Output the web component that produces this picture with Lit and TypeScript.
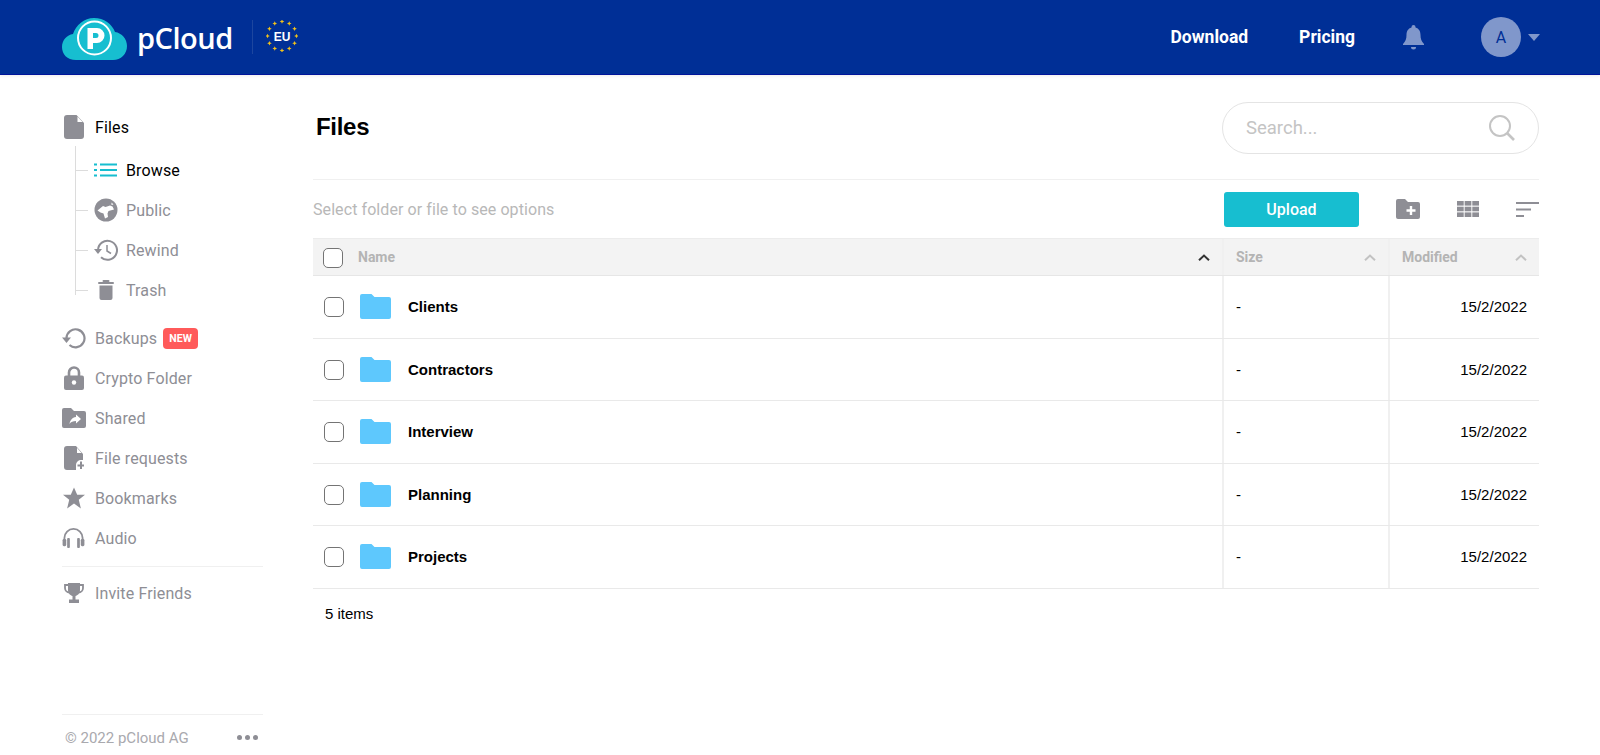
import { LitElement, html, css, svg } from 'lit';
import { customElement } from 'lit/decorators.js';

const G = '#8e8e95';

const icons: Record<string, unknown> = {
  file: svg`<svg width="20" height="24" viewBox="0 0 20 24"><path fill="${G}" d="M3 0h9.500L20 8v13a3 3 0 0 1-3 3H3a3 3 0 0 1-3-3V3a3 3 0 0 1 3-3z"/><path fill="#fff" d="M13.500 1.600 18.600 7h-5.100z"/></svg>`,
  list: svg`<svg width="24" height="14" viewBox="0 0 24 14" fill="#17bed0"><rect x="0" y="0.500" width="3" height="2"/><rect x="0" y="6" width="3" height="2"/><rect x="0" y="11.500" width="3" height="2"/><rect x="6" y="0.500" width="17" height="2"/><rect x="6" y="6" width="17" height="2"/><rect x="6" y="11.500" width="17" height="2"/></svg>`,
  globe: svg`<svg width="24" height="24" viewBox="0 0 24 24"><circle cx="12" cy="12" r="11.500" fill="${G}"/><path fill="#fff" d="M3.500 12.500 9 8l2.500 1L16 7.500l2.500 1 1.500 3-5.500 1.500-1 2.500.5 3.500-3 1.500-1.500-5-3-1zM17.500 4.500l2 2-2 .5z"/></svg>`,
  rewind: svg`<svg width="24" height="22" viewBox="0 0 24 22" fill="none" stroke="${G}" stroke-width="2"><path d="M4 11a9.500 9.500 0 1 1 3 7.200"/><path d="M13 6v6l4 2.500" stroke-width="1.500"/><path fill="${G}" stroke="none" d="M0 10h8l-4 5z"/></svg>`,
  trash: svg`<svg width="16" height="20" viewBox="0 0 16 20" fill="${G}"><rect x="0" y="2" width="16" height="2" rx="1"/><rect x="4.500" y="0" width="7" height="2" rx="1"/><path d="M1.500 5.500h13V18a2 2 0 0 1-2 2h-9a2 2 0 0 1-2-2z"/></svg>`,
  backup: svg`<svg width="24" height="22" viewBox="0 0 24 22" fill="none" stroke="${G}" stroke-width="2.200"><path d="M4.500 11a9 9 0 1 1 3 7"/><path fill="${G}" stroke="none" d="M0 10.500h9L4.500 16z"/></svg>`,
  lock: svg`<svg width="20" height="24" viewBox="0 0 20 24"><path fill="none" stroke="${G}" stroke-width="2.600" d="M5 11V6.500a5 5 0 0 1 10 0V11"/><rect y="9.500" width="20" height="14.500" rx="2" fill="${G}"/><circle cx="10" cy="16.500" r="2.200" fill="#fff"/></svg>`,
  shared: svg`<svg width="24" height="20" viewBox="0 0 24 20"><path fill="${G}" d="M2 0h7l3 3h10a2 2 0 0 1 2 2v13a2 2 0 0 1-2 2H2a2 2 0 0 1-2-2V2a2 2 0 0 1 2-2z"/><path fill="#fff" d="M14 6.500 19 11l-5 4.500V13c-3 0-5 .7-6.500 3 .5-3.500 2.500-6.500 6.500-7z"/></svg>`,
  request: svg`<svg width="20" height="24" viewBox="0 0 20 24"><path fill="${G}" d="M3 0h9l7 8v6h-2a5 5 0 0 0-5 5v5H3a3 3 0 0 1-3-3V3a3 3 0 0 1 3-3z"/><path fill="#fff" d="M13 1.800 17.600 7H13z"/><path stroke="${G}" stroke-width="2" d="M17 15.500v7.500M13.500 19.500H21"/></svg>`,
  star: svg`<svg style="margin-left:1px" width="22" height="22" viewBox="0 0 24 23"><path fill="${G}" d="m12 0 3.500 8H24l-6.800 5.500L19.500 23 12 17.500 4.500 23l2.300-9.500L0 8h8.500z"/></svg>`,
  audio: svg`<svg width="23" height="20" viewBox="0 0 24 22"><path fill="none" stroke="${G}" stroke-width="2" d="M2 14v-3a10 10 0 0 1 20 0v3"/><rect x="0" y="12" width="4" height="8" rx="1.500" fill="${G}"/><rect x="5" y="11" width="3" height="11" rx="1" fill="${G}"/><rect x="16" y="11" width="3" height="11" rx="1" fill="${G}"/><rect x="20" y="12" width="4" height="8" rx="1.500" fill="${G}"/></svg>`,
  trophy: svg`<svg width="20" height="20" viewBox="0 0 20 20"><path fill="none" stroke="${G}" stroke-width="1.800" d="M4 2H1v3c0 2.500 2 4.500 4.500 4.500M16 2h3v3c0 2.500-2 4.500-4.500 4.500"/><path fill="${G}" d="M4 0h12v7c0 3.500-2.500 5.500-4.500 6v3.500H15V20H5v-3.500h3.500V13C6.500 12.500 4 10.500 4 7z"/></svg>`,
  folder: svg`<svg width="31" height="25" viewBox="0 0 31 25"><path fill="#5ec8fd" d="M2 0h9.500l3 3H29a2 2 0 0 1 2 2v18a2 2 0 0 1-2 2H2a2 2 0 0 1-2-2V2a2 2 0 0 1 2-2z"/></svg>`,
  chevron: svg`<svg width="12" height="7" viewBox="0 0 12 7" fill="none" stroke="currentColor" stroke-width="2"><path d="M1 6.200 6 1.500l5 4.700"/></svg>`,
};

const sub = [
  { id: 'list', label: 'Browse', active: true },
  { id: 'globe', label: 'Public' },
  { id: 'rewind', label: 'Rewind' },
  { id: 'trash', label: 'Trash' },
];

const nav = [
  { id: 'backup', label: 'Backups', badge: 'NEW' },
  { id: 'lock', label: 'Crypto Folder', narrow: true },
  { id: 'shared', label: 'Shared' },
  { id: 'request', label: 'File requests', narrow: true },
  { id: 'star', label: 'Bookmarks' },
  { id: 'audio', label: 'Audio' },
];

const folders = ['Clients', 'Contractors', 'Interview', 'Planning', 'Projects'];

// 12 small stars round the EU mark
const stars = Array.from({ length: 12 }, (_, i) => {
  const a = (i * Math.PI) / 6;
  const x = 16 + 14.5 * Math.sin(a);
  const y = 16 - 14.5 * Math.cos(a);
  const s = 2.3;
  return svg`<path fill="#f2c21a" d="M${x} ${y - s}L${x + s * 0.3} ${y - s * 0.3}L${x + s} ${y}L${x + s * 0.3} ${y + s * 0.3}L${x} ${y + s}L${x - s * 0.3} ${y + s * 0.3}L${x - s} ${y}L${x - s * 0.3} ${y - s * 0.3}Z"/>`;
});

@customElement('app-root')
export class AppRoot extends LitElement {
  static styles = css`
    :host {
      display: flex;
      flex-direction: column;
      height: 100vh;
      overflow: hidden;
      background: #fff;
      font-family: Roboto, sans-serif;
      color: #000;
    }
    .top {
      flex: none;
      height: 74px;
      background: #002f96;
      border-bottom: 1px solid #00149a;
      box-shadow: 0 1px 3px rgba(0, 0, 0, 0.08);
      display: flex;
      align-items: center;
      padding: 0 60px 0 62px;
    }
    .top svg { display: block; flex: none; }
    .cloud { margin-top: 4px; }
    .brand {
      font-family: 'Open Sans', sans-serif;
      font-size: 29px;
      font-weight: 600;
      letter-spacing: -0.5px;
      color: #fff;
      margin-left: 10px;
      line-height: 1;
    }
    .sep {
      width: 1px;
      height: 34px;
      background: #1d469f;
      margin: 0 13px 0 19px;
    }
    .eu { margin-top: -2px; }
    .top-right {
      margin-left: auto;
      display: flex;
      align-items: center;
    }
    .top-link {
      color: #fff;
      font-size: 17.500px;
      font-weight: 700;
      margin-right: 51px;
    }
    .bell { margin: 0 57px 0 -3px; }
    .avatar {
      width: 40px;
      height: 40px;
      border-radius: 50%;
      background: #8097cb;
      color: #002f96;
      display: flex;
      align-items: center;
      justify-content: center;
      font-size: 16px;
    }
    .caret {
      width: 0;
      height: 0;
      border-left: 6px solid transparent;
      border-right: 6px solid transparent;
      border-top: 7px solid #8097cb;
      margin-left: 7px;
    }
    .body {
      flex: 1;
      display: flex;
      min-height: 0;
      padding: 0 61px 0 62px;
    }
    .side {
      flex: none;
      width: 201px;
      margin-right: 50px;
      display: flex;
      flex-direction: column;
      padding-top: 32px;
      font-size: 16px;
      letter-spacing: 0.13px;
      color: #8e8e95;
    }
    .item {
      height: 40px;
      flex: none;
      display: flex;
      align-items: center;
      white-space: nowrap;
    }
    .ico {
      width: 33px;
      flex: none;
      display: flex;
    }
    .ico svg { display: block; }
    .ico.narrow svg { margin-left: 2px; }
    .current { color: #000; }
    .tree {
      margin: -1px 0 23px 13px;
      border-left: 1px solid #dcdcdc;
      padding: 4px 0 0 18px;
      height: 145px;
      flex: none;
    }
    .tree .item { position: relative; }
    .tree .item::before {
      content: '';
      position: absolute;
      left: -18px;
      top: 50%;
      width: 12px;
      border-top: 1px solid #dcdcdc;
    }
    .tree .ico { justify-content: center; width: 24px; margin-right: 8px; }
    .badge {
      background: #ff5a5a;
      color: #fff;
      font-size: 10.500px;
      font-weight: 700;
      border-radius: 4px;
      padding: 4px 6px;
      margin-left: 6px;
      line-height: 13px;
    }
    .rule {
      height: 1px;
      background: #f0f0f0;
      margin: 8px 0 6px;
      flex: none;
    }
    .foot {
      margin-top: auto;
      border-top: 1px solid #f0f0f0;
      height: 35px;
      display: flex;
      align-items: center;
      justify-content: space-between;
      font-size: 15px;
      letter-spacing: 0;
      color: #a9a9ae;
      padding: 5px 5px 0 3px;
      flex: none;
    }
    .dots { display: flex; gap: 3px; }
    .dots i { width: 5px; height: 5px; border-radius: 50%; background: #8e8e95; }
    .main { flex: 1; min-width: 0; display: flex; flex-direction: column; }
    .head {
      display: flex;
      align-items: center;
      justify-content: space-between;
      padding: 27px 0 25px;
      border-bottom: 1px solid #f0f0f0;
    }
    h1 {
      margin: -2px 0 0 3px;
      font-size: 24px;
      font-weight: 700;
      letter-spacing: -0.3px;
      font-family: 'Liberation Sans', sans-serif;
    }
    .search {
      width: 317px;
      height: 52px;
      box-sizing: border-box;
      border: 1px solid #e4e4e4;
      border-radius: 26px;
      display: flex;
      align-items: center;
      justify-content: space-between;
      padding: 0 23px;
      font-size: 18.500px;
      color: #c4c4c4;
    }
    .tools {
      height: 58px;
      display: flex;
      align-items: center;
      color: #b8b8b8;
      font-size: 16px;
      letter-spacing: 0.08px;
    }
    .upload {
      margin-left: auto;
      width: 135px;
      height: 35px;
      border-radius: 3px;
      background: #17bed0;
      color: #fff;
      font-size: 16px;
      font-weight: 500;
      letter-spacing: 0;
      display: flex;
      align-items: center;
      justify-content: center;
      margin-top: 1px;
    }
    .tools svg { display: block; flex: none; margin-left: 37px; }
    .row {
      display: grid;
      grid-template-columns: 909px 166px 151px;
      height: 62.500px;
      box-sizing: border-box;
      border-bottom: 1px solid #e9e9e9;
      font: 15px 'Liberation Sans', sans-serif;
    }
    .row > div { display: flex; align-items: center; min-width: 0; }
    .row > div + div { border-left: 2px solid #f0f0f0; box-sizing: border-box; padding-left: 12px; }
    .row .date { justify-content: flex-end; padding-right: 12px; }
    .row .name { padding-left: 11px; font-weight: 700; }
    .box {
      width: 20px;
      height: 20px;
      box-sizing: border-box;
      border: 1.500px solid #747474;
      border-radius: 5px;
      background: #fff;
      flex: none;
      margin-top: 1px;
    }
    .row .name svg { display: block; flex: none; margin: 0 17px 0 16px; }
    .row.th {
      height: 38px;
      background: #f3f3f3;
      border-top: 1px solid #ececec;
      border-bottom: 1px solid #e6e6e6;
      font: 700 14px Roboto, sans-serif;
      color: #b4b4b4;
    }
    .th > div { justify-content: space-between; padding-right: 12px; }
    .th > div + div { padding-left: 12px; }
    .th .namecol { padding-left: 10px; }
    .th .label { margin-left: 15px; margin-right: auto; }
    .th svg { display: block; }
    .th .on { color: #333; }
    .th .off { color: #c2c2c2; }
    .count { font: 15px 'Liberation Sans', sans-serif; padding: 16px 0 0 12px; }
  `;

  render() {
    return html`
      <div class="top">
        <svg class="cloud" width="65" height="42" viewBox="0 0 65 42">
          <path fill="#17bed0" d="M14 42C5 42 0 36 0 29c0-7 5-12 11-13C14 7 22 0 32 0c10 0 18 6 21 14 7 1 12 7 12 14 0 8-6 14-14 14z"/>
          <circle cx="32.500" cy="20" r="16.500" fill="none" stroke="#fff" stroke-width="2"/>
          <path fill="#fff" d="M25.500 10h9.500a7.500 7.500 0 0 1 0 15h-4v6h-5.500zm5.500 5v5h3a2.500 2.500 0 0 0 0-5z"/>
        </svg>
        <span class="brand">pCloud</span>
        <span class="sep"></span>
        <svg class="eu" width="32" height="32" viewBox="0 0 32 32">
          ${stars}
          <text x="16" y="20.500" text-anchor="middle" font-family="Liberation Sans" font-weight="700" font-size="12" fill="#fff">EU</text>
        </svg>
        <div class="top-right">
          <span class="top-link">Download</span>
          <span class="top-link">Pricing</span>
          <svg class="bell" width="21" height="25" viewBox="0 0 21 25" fill="#8097cb">
            <path d="M10.500 0a2 2 0 0 1 2 2v.500c3.500 1 5 4 5 7.500 0 4 1 6.500 3.500 9v1H0v-1c2.500-2.500 3.500-5 3.500-9 0-3.500 1.500-6.500 5-7.500V2a2 2 0 0 1 2-2z"/>
            <path d="M8 22h5a2.500 2.500 0 0 1-5 0z"/>
          </svg>
          <div class="avatar">A</div>
          <span class="caret"></span>
        </div>
      </div>
      <div class="body">
        <nav class="side">
          <div class="item current"><span class="ico narrow">${icons.file}</span>Files</div>
          <div class="tree">
            ${sub.map(s => html`
              <div class="item ${s.active ? 'current' : ''}"><span class="ico">${icons[s.id]}</span>${s.label}</div>
            `)}
          </div>
          ${nav.map(n => html`
            <div class="item">
              <span class="ico ${n.narrow ? 'narrow' : ''}">${icons[n.id]}</span>${n.label}
              ${n.badge ? html`<span class="badge">${n.badge}</span>` : ''}
            </div>
          `)}
          <div class="rule"></div>
          <div class="item"><span class="ico narrow">${icons.trophy}</span>Invite Friends</div>
          <div class="foot">
            <span>© 2022 pCloud AG</span>
            <span class="dots"><i></i><i></i><i></i></span>
          </div>
        </nav>
        <main class="main">
          <div class="head">
            <h1>Files</h1>
            <div class="search">
              <span>Search...</span>
              <svg width="26" height="26" viewBox="0 0 26 26" fill="none" stroke="#c4c4c4" stroke-width="2"><circle cx="11" cy="11" r="10"/><path d="m18 18 7 7" stroke-width="2.600"/></svg>
            </div>
          </div>
          <div class="tools">
            <span>Select folder or file to see options</span>
            <span class="upload">Upload</span>
            <svg width="24" height="20" viewBox="0 0 24 20"><path fill="${G}" d="M2 0h7l3 3h10a2 2 0 0 1 2 2v13a2 2 0 0 1-2 2H2a2 2 0 0 1-2-2V2a2 2 0 0 1 2-2z"/><path stroke="#fff" stroke-width="2.400" d="M15 7v9M10.500 11.500h9"/></svg>
            <svg width="22" height="16" viewBox="0 0 22 16" fill="${G}"><rect width="6.700" height="4.600"/><rect x="7.650" width="6.700" height="4.600"/><rect x="15.300" width="6.700" height="4.600"/><rect y="5.700" width="6.700" height="4.600"/><rect x="7.650" y="5.700" width="6.700" height="4.600"/><rect x="15.300" y="5.700" width="6.700" height="4.600"/><rect y="11.400" width="6.700" height="4.600"/><rect x="7.650" y="11.400" width="6.700" height="4.600"/><rect x="15.300" y="11.400" width="6.700" height="4.600"/></svg>
            <svg width="23" height="15" viewBox="0 0 23 15" fill="${G}"><rect width="23" height="2"/><rect y="6.500" width="15" height="2"/><rect y="13" width="8" height="2"/></svg>
          </div>
          <div class="row th">
            <div class="namecol"><span class="box"></span><span class="label">Name</span><span class="on">${icons.chevron}</span></div>
            <div>Size<span class="off">${icons.chevron}</span></div>
            <div>Modified<span class="off">${icons.chevron}</span></div>
          </div>
          ${folders.map(f => html`
            <div class="row">
              <div class="name"><span class="box"></span>${icons.folder}${f}</div>
              <div>-</div>
              <div class="date">15/2/2022</div>
            </div>
          `)}
          <div class="count">5 items</div>
        </main>
      </div>
    `;
  }
}
